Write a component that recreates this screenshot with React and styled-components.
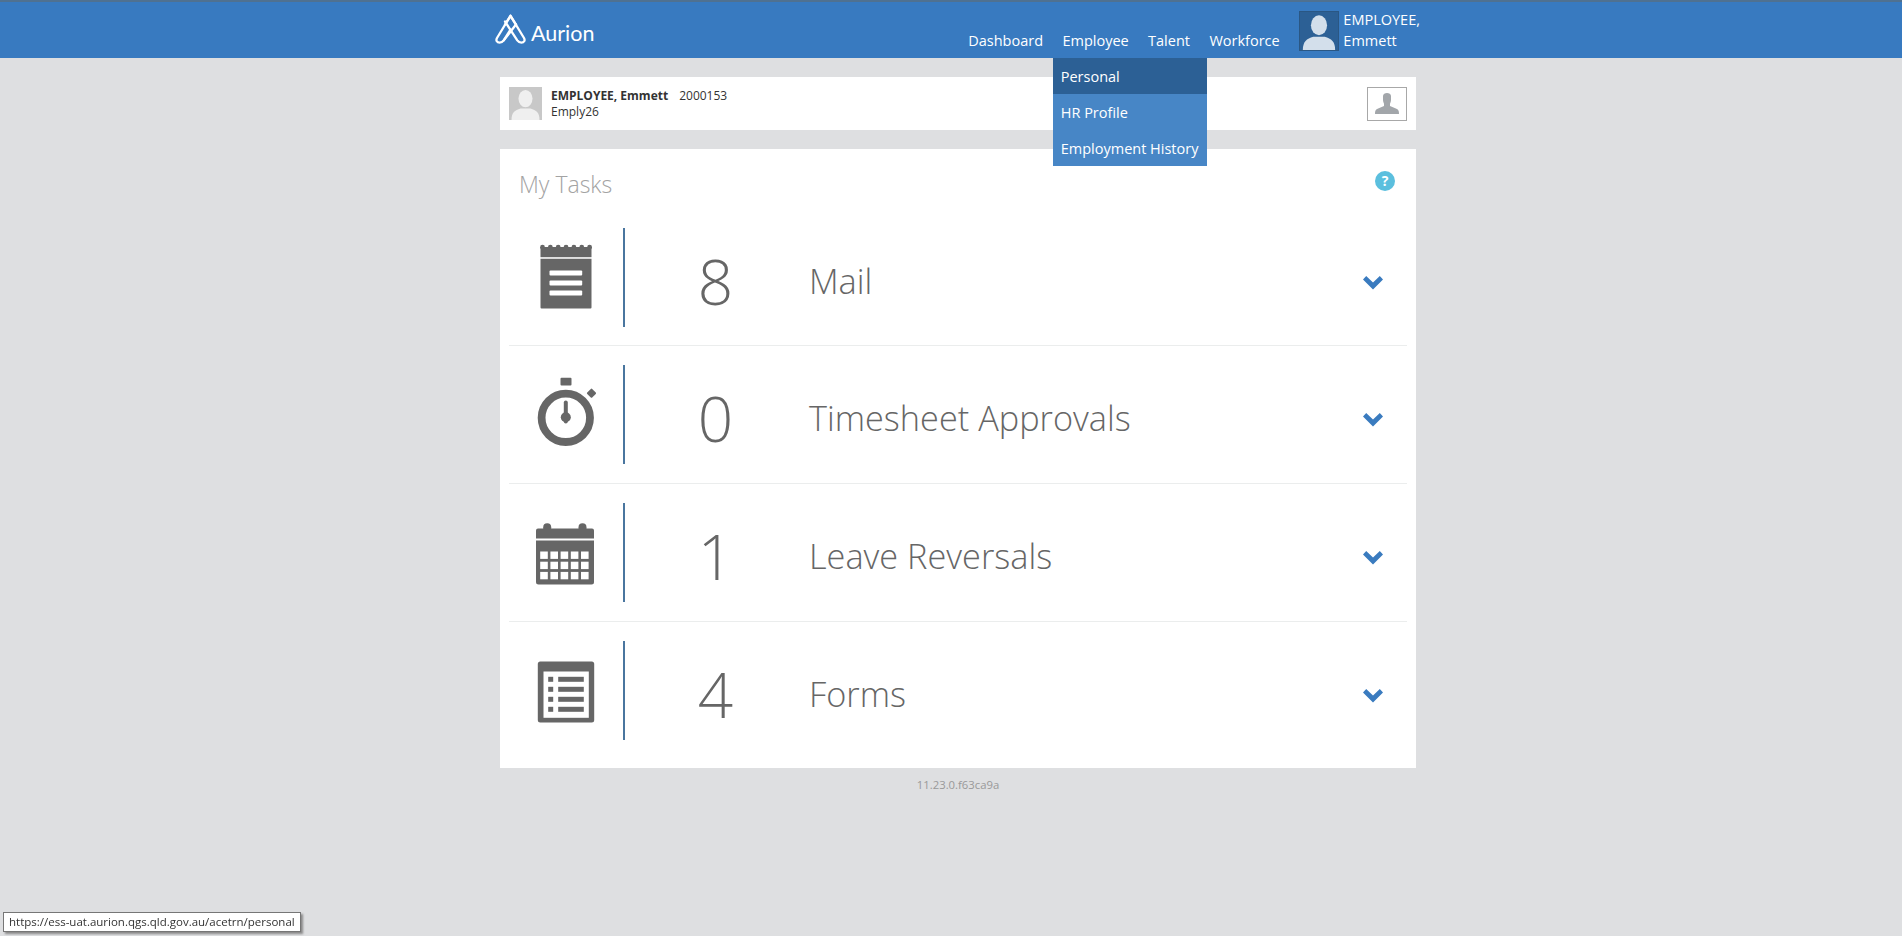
import React from 'react';
import styled, { createGlobalStyle } from 'styled-components';

const GlobalStyle = createGlobalStyle`
  html, body {
    margin: 0;
    padding: 0;
    height: 100%;
    background: #dedfe1;
    font-family: "Open Sans", "Liberation Sans", sans-serif;
    color: #333;
  }
  * { box-sizing: border-box; }
`;

const Page = styled.div`
  min-height: 936px;
  display: flex;
  flex-direction: column;
`;
const Header = styled.header`
  position: relative;
  z-index: 2;
  height: 58px;
  padding-left: 14px;
  background: #387ac0;
  border-top: 2px solid #4f7191;
`;
const HeaderInner = styled.div`
  width: 926px;
  height: 56px;
  margin: 0 auto;
  display: flex;
  align-items: stretch;
  justify-content: space-between;
  color: #fff;
`;
const Logo = styled.div`
  display: flex;
  align-items: flex-end;
  gap: 5px;
  padding: 12px 0 14px;
`;
const LogoText = styled.span`
  font-family: "Lato", "Open Sans", sans-serif;
  font-weight: 400;
  font-size: 21.5px;
  line-height: 22px;
`;
const NavArea = styled.div`
  display: flex;
  align-items: stretch;
`;
const Nav = styled.nav`
  display: flex;
  margin-right: 10px;
`;
const NavItem = styled.div`
  position: relative;
  padding: 29px 9.7px 0;
  font-size: 14.5px;
  line-height: 20px;
  white-space: nowrap;
`;
const Dropdown = styled.div`
  position: absolute;
  top: 56px;
  left: 0;
  width: 154px;
  background: #4786c6;
`;
const DropdownItem = styled.div`
  height: 36px;
  padding-left: 8px;
  line-height: 38px;
  font-size: 14.5px;
  background: ${({ $active }) => ($active ? '#2c6095' : 'transparent')};
`;
const UserBlock = styled.div`
  display: flex;
  gap: 4px;
  padding-top: 9px;
  margin-right: 1px;
`;
const UserAvatar = styled.div`
  width: 40px;
  height: 40px;
  background: #2c6095;
  border: 1px solid #2a5784;
  overflow: hidden;
`;
const UserName = styled.div`
  margin-top: -2px;
  font-size: 14.5px;
  line-height: 21px;
`;
const Content = styled.div`
  padding-left: 14px;
`;
const Main = styled.main`
  width: 916px;
  margin: 19px auto 0;
`;
const PersonCard = styled.section`
  height: 53px;
  background: #fff;
  padding: 10px 9px;
  display: flex;
  justify-content: space-between;
  align-items: flex-start;
`;
const PersonInfo = styled.div`
  display: flex;
  gap: 9px;
`;
const PersonPhoto = styled.div`
  width: 33px;
  height: 33px;
  background: #c8c8c8;
  overflow: hidden;
`;
const PersonText = styled.div`
  font-size: 12px;
  line-height: 16px;
  padding-top: 1px;
`;
const PersonName = styled.span`
  font-weight: 700;
  margin-right: 11px;
`;
const ProfileButton = styled.div`
  width: 40px;
  height: 34px;
  border: 1px solid #a8a8a8;
  display: flex;
  align-items: center;
  justify-content: center;
`;
const TasksCard = styled.section`
  position: relative;
  margin-top: 19px;
  height: 619px;
  padding: 0 9px 8px;
  background: #fff;
`;
const TasksTitle = styled.h2`
  margin: 0;
  height: 59px;
  padding: 20px 0 0 10px;
  font-size: 23px;
  line-height: 30px;
  font-weight: 300;
  color: #a3a3a3;
`;
const HelpBadge = styled.div`
  position: absolute;
  top: 22px;
  right: 21px;
  width: 20px;
  height: 20px;
  border-radius: 50%;
  background: #5bbfde;
  color: #fff;
  font-size: 14px;
  font-weight: 700;
  line-height: 20px;
  text-align: center;
`;
const TaskRow = styled.div`
  height: 138px;
  padding: ${({ $first }) => ($first ? '20px 23px 18px 0' : '19px 23px 19px 0')};
  display: grid;
  grid-template-columns: 113px 187px 1fr 22px;
  align-items: center;
  border-bottom: 1px solid ${({ $last }) => ($last ? 'transparent' : '#ebeded')};
`;
const IconCell = styled.div`
  display: flex;
  justify-content: center;
`;
const TaskCount = styled.div`
  height: 99px;
  margin-left: 1px;
  padding: 4px 3px 0 0;
  border-left: 2px solid #4a769f;
  text-align: center;
  font-size: 62px;
  line-height: 99px;
  font-weight: 300;
  color: #666;
`;
const TaskLabel = styled.div`
  padding-top: 7px;
  font-size: 34.3px;
  line-height: 48px;
  font-weight: 300;
  color: #666;
`;
const Version = styled.div`
  margin-top: 9px;
  text-align: center;
  font-size: 11.3px;
  line-height: 16px;
  color: #999;
`;
const StatusTip = styled.div`
  position: fixed;
  left: 3px;
  bottom: 4px;
  height: 20px;
  padding: 0 5px;
  background: #fff;
  border: 1px solid #767676;
  box-shadow: 2px 2px 2px #8a8a8a;
  font-size: 11.5px;
  line-height: 18px;
  color: #333;
  white-space: nowrap;
`;

const LogoMark = () => (
  <svg width="31" height="30" viewBox="0 0 31 30" fill="none" stroke="#fff" strokeWidth="2.3" strokeLinejoin="round" strokeLinecap="round">
    <path d="M21 10.5 L15.5 1.8 L2 24 C.6 26.6 2 28.6 4.6 28.6 C6.6 28.6 7.7 27.8 8.7 26.4 L15.5 15.5" />
    <path d="M10 10.5 L15.5 1.8 L29 24 C30.4 26.6 29 28.6 26.4 28.6 C24.4 28.6 23.3 27.8 22.3 26.4 L10 7.5" />
    <path d="M21 10.5 L8.7 26.4" />
  </svg>
);

const Silhouette = ({ color, size }) => (
  <svg width={size} height={size} viewBox="0 0 40 40" fill={color} style={{ display: 'block' }}>
    <ellipse cx="20" cy="14" rx="8.5" ry="10.5" />
    <path d="M3 40 C3 31 7 28 14 26 L26 26 C33 28 37 31 37 40 Z" />
  </svg>
);

const ProfileGlyph = () => (
  <svg width="24" height="22" viewBox="0 0 24 22" fill="#a2a6aa">
    <path d="M8 3 C8 1 10 0 12 0 C14 0 16 1 16 3 L16 7 C16 9 15 10 15 11 L15 13 L22 16 C23.5 16.8 24 18 24 21 L0 21 C0 18 .5 16.8 2 16 L9 13 L9 11 C9 10 8 9 8 7 Z" />
  </svg>
);

// every task icon shares a 60x76 canvas, so it sits on the same axis in the row
const IconCanvas = ({ children }) => (
  <svg width="60" height="76" viewBox="0 0 60 76" fill="#666" style={{ display: 'block' }}>
    {children}
  </svg>
);

const MailIcon = () => {
  const teeth = [];
  for (let i = 0; i < 7; i += 1) {
    teeth.push(<circle key={i} cx={6.5 + i * 7.85} cy={7.2} r={2.4} />);
  }
  return (
    <IconCanvas>
      {teeth}
      <rect x="4.5" y="7" width="51" height="10.2" />
      <path d="M4.5 18.8 H55.5 V67.5 a1 1 0 0 1 -1 1 H5.5 a1 1 0 0 1 -1 -1 Z" />
      {[30.5, 40.5, 50.5].map((y) => (
        <rect key={y} x="13.5" y={y} width="32.7" height="5" rx="1" fill="#fff" />
      ))}
    </IconCanvas>
  );
};

const TimerIcon = () => (
  <IconCanvas>
    <rect x="24.5" y="0.8" width="11" height="7.7" rx="1" />
    <rect x="52" y="12.7" width="7" height="7" rx="1" transform="rotate(45 55.5 16.2)" />
    <circle cx="29.8" cy="40.8" r="24.2" fill="none" stroke="#666" strokeWidth="7.8" />
    <rect x="27.8" y="23.5" width="4" height="23" rx="2" />
    <circle cx="29.8" cy="40.2" r="5" />
  </IconCanvas>
);

const CalendarIcon = () => {
  const cells = [];
  for (let row = 0; row < 3; row += 1) {
    for (let col = 0; col < 5; col += 1) {
      cells.push(<rect key={`${row}-${col}`} x={4.2 + col * 10.2} y={36.5 + row * 10.2} width="7.6" height="7.4" fill="#fff" />);
    }
  }
  return (
    <IconCanvas>
      <rect x="7.2" y="8.2" width="8" height="9" rx="4" />
      <rect x="42.5" y="8.2" width="8" height="9" rx="4" />
      <path d="M2 13.5 H56 a2 2 0 0 1 2 2 V23.6 H0 V15.5 a2 2 0 0 1 2 -2 Z" />
      <path d="M0 25.6 H58 V67 a2.5 2.5 0 0 1 -2.5 2.5 H2.5 A2.5 2.5 0 0 1 0 67 Z" />
      {cells}
    </IconCanvas>
  );
};

const FormsIcon = () => (
  <IconCanvas>
    <rect x="1.8" y="8.5" width="56.4" height="61" rx="2.5" />
    <rect x="7.5" y="18.5" width="45.3" height="46.3" fill="#fff" />
    {[23.8, 33.8, 43.8, 53.8].map((y) => (
      <g key={y}>
        <rect x="12.2" y={y} width="5" height="5" />
        <rect x="22.2" y={y} width="25.6" height="5" />
      </g>
    ))}
  </IconCanvas>
);

const ChevronIcon = styled.svg`
  display: block;
  margin-top: 10px;
`;
const Chevron = () => (
  <ChevronIcon width="22" height="14" viewBox="0 0 22 14">
    <path d="M4.2 0 L11 6.6 L17.8 0 L21 3.5 L11 13.5 L1 3.5 Z" fill="#3a7bbf" />
  </ChevronIcon>
);

const tasks = [
  { count: 8, label: 'Mail', Icon: MailIcon },
  { count: 0, label: 'Timesheet Approvals', Icon: TimerIcon },
  { count: 1, label: 'Leave Reversals', Icon: CalendarIcon },
  { count: 4, label: 'Forms', Icon: FormsIcon },
];

const App = () => (
  <Page>
    <GlobalStyle />
    <Header>
      <HeaderInner>
        <Logo>
          <LogoMark />
          <LogoText>Aurion</LogoText>
        </Logo>
        <NavArea>
          <Nav>
            <NavItem>Dashboard</NavItem>
            <NavItem>
              Employee
              <Dropdown>
                <DropdownItem $active>Personal</DropdownItem>
                <DropdownItem>HR Profile</DropdownItem>
                <DropdownItem>Employment History</DropdownItem>
              </Dropdown>
            </NavItem>
            <NavItem>Talent</NavItem>
            <NavItem>Workforce</NavItem>
          </Nav>
          <UserBlock>
            <UserAvatar>
              <Silhouette color="#d3dfeb" size={38} />
            </UserAvatar>
            <UserName>
              EMPLOYEE,
              <br />
              Emmett
            </UserName>
          </UserBlock>
        </NavArea>
      </HeaderInner>
    </Header>
    <Content>
      <Main>
        <PersonCard>
          <PersonInfo>
            <PersonPhoto>
              <Silhouette color="#efefef" size={33} />
            </PersonPhoto>
            <PersonText>
              <PersonName>EMPLOYEE, Emmett</PersonName>
              2000153
              <br />
              Emply26
            </PersonText>
          </PersonInfo>
          <ProfileButton>
            <ProfileGlyph />
          </ProfileButton>
        </PersonCard>
        <TasksCard>
          <TasksTitle>My Tasks</TasksTitle>
          <HelpBadge>?</HelpBadge>
          {tasks.map(({ count, label, Icon }, index) => (
            <TaskRow key={label} $first={index === 0} $last={index === tasks.length - 1}>
              <IconCell>
                <Icon />
              </IconCell>
              <TaskCount>{count}</TaskCount>
              <TaskLabel>{label}</TaskLabel>
              <Chevron />
            </TaskRow>
          ))}
        </TasksCard>
        <Version>11.23.0.f63ca9a</Version>
      </Main>
    </Content>
    <StatusTip>https://ess-uat.aurion.qgs.qld.gov.au/acetrn/personal</StatusTip>
  </Page>
);

export default App;
